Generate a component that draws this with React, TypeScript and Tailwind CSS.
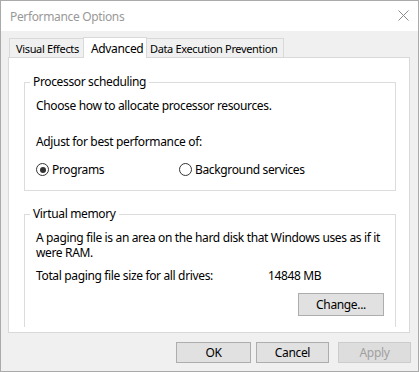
import React from "react";

function Radio({ checked }: { checked?: boolean }) {
  return (
    <span className="flex h-[13px] w-[13px] shrink-0 items-center justify-center rounded-full border border-[#333333] bg-white">
      {checked && <span className="h-[6px] w-[6px] rounded-full bg-[#333333]" />}
    </span>
  );
}

function Button({ label, width, disabled }: { label: string; width: string; disabled?: boolean }) {
  return (
    <button
      className={
        width +
        (disabled
          ? " h-[21px] border border-[#cccccc] bg-[#dddddd] text-[#a0a0a0]"
          : " h-[21px] border border-[#adadad] bg-[#e1e1e1] text-black")
      }
    >
      {label}
    </button>
  );
}

export default function App() {
  return (
    <div
      className="flex h-[372px] w-[419px] flex-col whitespace-nowrap border border-[#aaaaaa] bg-[#f0f0f0] text-[12px] leading-[15px] tracking-[-0.35px] text-black"
      style={{ fontFamily: '"Noto Sans", "Segoe UI", sans-serif' }}
    >
      {/* Title bar */}
      <div className="flex h-[30px] items-center justify-between bg-white pl-[9px] pr-[9px]">
        <span className="text-[#999999]">Performance Options</span>
        <svg width="11" height="11" viewBox="0 0 11 11" className="mb-[1px]">
          <path d="M0.5 0.5 L10.5 10.5 M10.5 0.5 L0.5 10.5" stroke="#8a8a8a" strokeWidth="1" fill="none" />
        </svg>
      </div>

      {/* Tabs */}
      <div className="mt-[6px] flex h-[20px] items-end pl-[8px] text-[11px]">
        <div className="flex h-[19px] w-[74px] items-center border border-b-0 border-r-0 border-[#d9d9d9] pl-[6px]">
          Visual Effects
        </div>
        <div className="relative z-10 flex h-[21px] w-[64px] translate-y-[1px] items-start border border-b-0 border-[#d9d9d9] bg-white pl-[7px] pt-[3px] text-[12px]">
          Advanced
        </div>
        <div className="flex h-[19px] w-[137px] items-center border border-b-0 border-l-0 border-[#d9d9d9] pl-[3px]">
          Data Execution Prevention
        </div>
      </div>

      {/* Panel */}
      <div className="ml-[7px] flex h-[276px] w-[402px] flex-col border border-[#d9d9d9] bg-white">
        <fieldset className="ml-[15px] mt-[16px] w-[372px] border border-[#dcdcdc] pb-[13px]">
          <legend className="ml-[5px] px-[3px] leading-[16px]">Processor scheduling</legend>
          <div className="pl-[11px]">
            <div className="mt-[8px]">Choose how to allocate processor resources.</div>
            <div className="mt-[21px]">Adjust for best performance of:</div>
            <div className="mt-[13px] flex items-center">
              <div className="flex w-[143px] items-center gap-[3px]">
                <Radio checked />
                <span>Programs</span>
              </div>
              <div className="flex items-center gap-[3px]">
                <Radio />
                <span>Background services</span>
              </div>
            </div>
          </div>
        </fieldset>

        <fieldset className="ml-[15px] mt-[15px] w-[372px] border border-b-0 border-[#dcdcdc] pb-[11px]">
          <legend className="ml-[5px] px-[3px] leading-[16px]">Virtual memory</legend>
          <div className="pl-[11px]">
            <p className="mt-[8px]">
              A paging file is an area on the hard disk that Windows uses as if it
              <br />
              were RAM.
            </p>
            <div className="mt-[8px] flex">
              <span className="w-[232px]">Total paging file size for all drives:</span>
              <span>14848 MB</span>
            </div>
            <div className="mt-[10px] flex justify-end pr-[11px]">
              <button className="h-[23px] w-[86px] border border-[#adadad] bg-[#e1e1e1]">Change...</button>
            </div>
          </div>
        </fieldset>
      </div>

      {/* Dialog buttons */}
      <div className="mt-[9px] flex justify-end pr-[7px]">
        <Button label="OK" width="w-[75px]" />
        <div className="ml-[5px]">
          <Button label="Cancel" width="w-[73px]" />
        </div>
        <div className="ml-[9px]">
          <Button label="Apply" width="w-[73px]" disabled />
        </div>
      </div>
    </div>
  );
}
